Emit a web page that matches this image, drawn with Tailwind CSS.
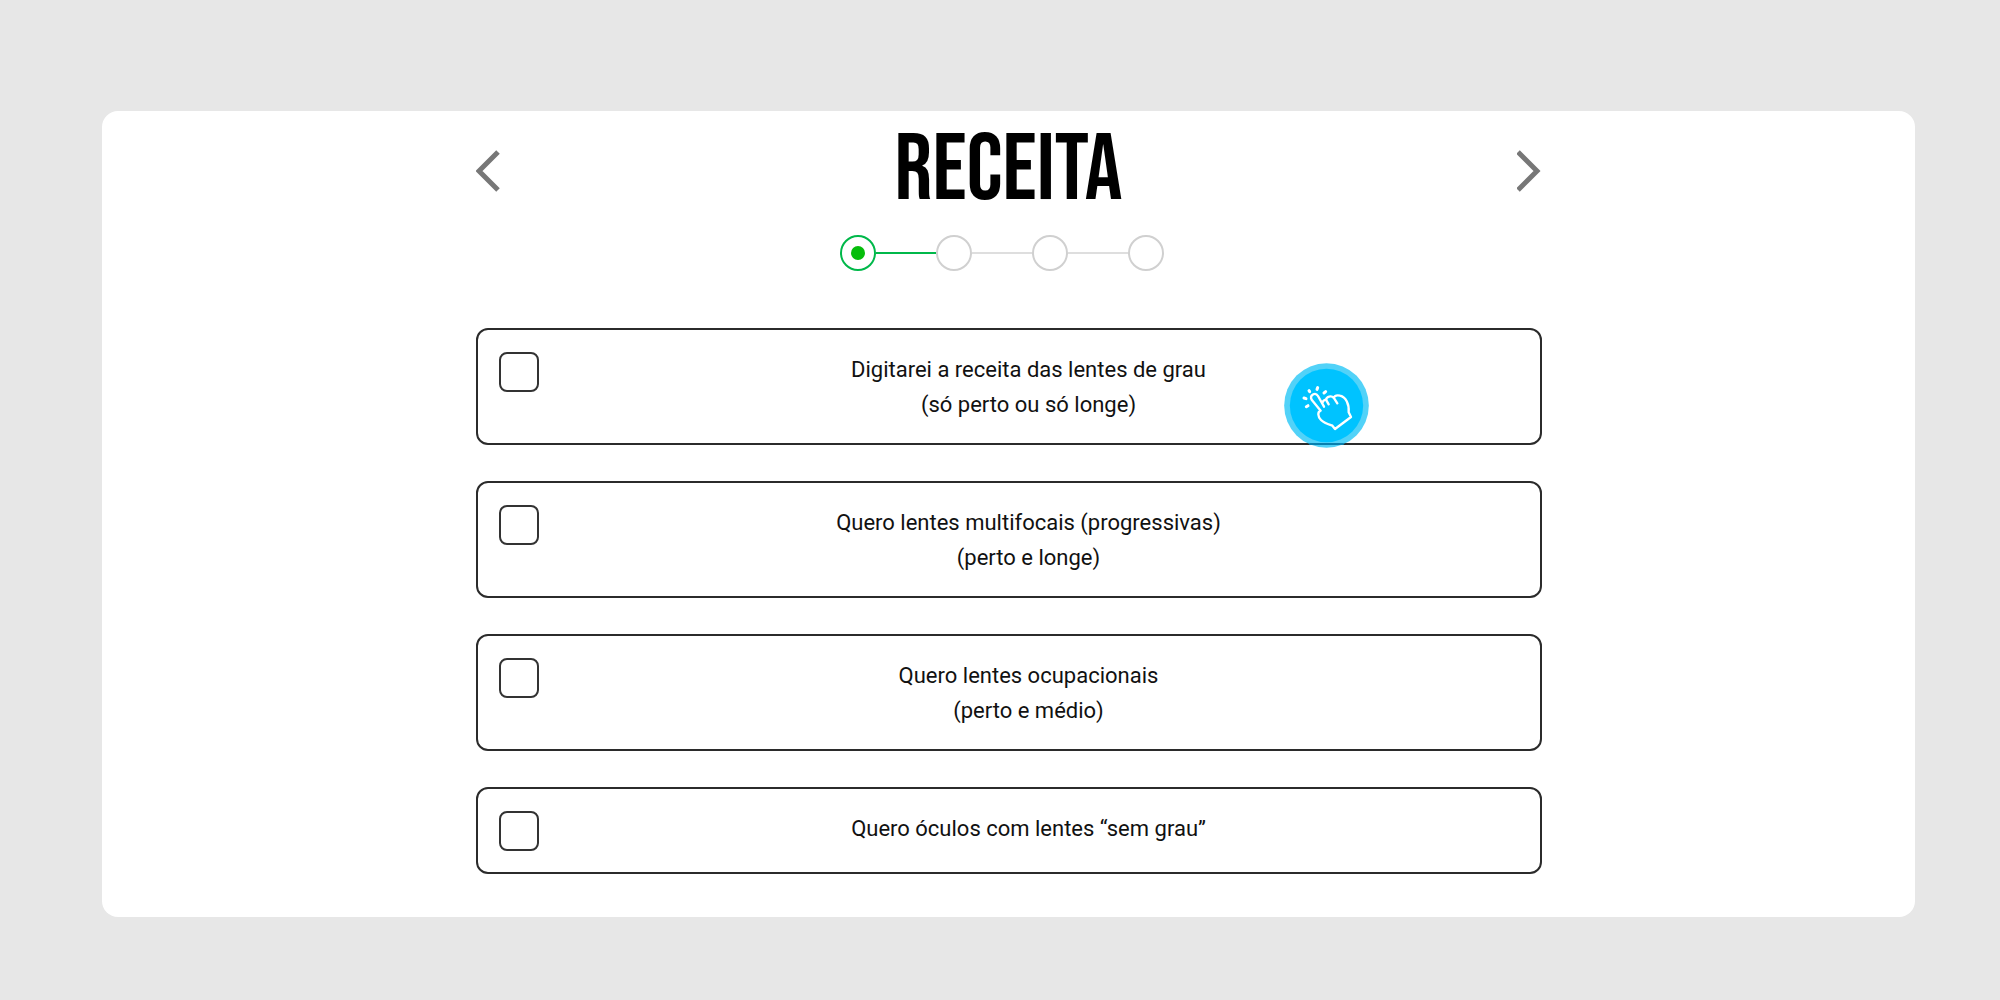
<!DOCTYPE html>
<html lang="pt-BR">
<head>
  <meta charset="UTF-8" />
  <meta name="viewport" content="width=device-width, initial-scale=1" />
  <title>Receita</title>
  <script src="https://cdn.jsdelivr.net/npm/@tailwindcss/browser@4"></script>
</head>
<body class="min-h-screen bg-[#e7e7e7] pt-[111px] pr-[85px] pb-[83px] pl-[102px] font-['Roboto',sans-serif] text-[#111]">

<main class="rounded-2xl bg-white px-6 pt-3 pb-[43px]">
  <div class="mx-auto max-w-[1066px]">

    <!-- Title and arrows -->
    <header class="flex h-24 items-center justify-between">
      <button type="button" aria-label="Voltar" class="cursor-pointer">
        <svg class="h-11 w-6" viewBox="0 0 24 44" fill="none" stroke="#777" stroke-width="5">
          <path d="M22 3L3 22L22 41"/>
        </svg>
      </button>
      <h1 class="font-['Bebas_Neue','Liberation_Sans_Narrow',sans-serif] text-[94px] leading-none font-normal text-black">RECEITA</h1>
      <button type="button" aria-label="Avançar" class="cursor-pointer">
        <svg class="h-11 w-6" viewBox="0 0 24 44" fill="none" stroke="#777" stroke-width="5">
          <path d="M1 3L20 22L1 41"/>
        </svg>
      </button>
    </header>

    <!-- Steps -->
    <ol class="mt-4 flex items-center justify-center pr-3.5" aria-label="Etapas">
      <li class="flex size-9 items-center justify-center rounded-full border-2 border-[#00b84a]" aria-current="step">
        <span class="size-3.5 rounded-full bg-[#06bd0b]"></span>
      </li>
      <li class="flex items-center">
        <span class="h-0.5 w-15 bg-[#00b84a]"></span>
        <span class="size-9 rounded-full border-2 border-[#d0d0d0]"></span>
      </li>
      <li class="flex items-center">
        <span class="h-0.5 w-15 bg-[#dedede]"></span>
        <span class="size-9 rounded-full border-2 border-[#d0d0d0]"></span>
      </li>
      <li class="flex items-center">
        <span class="h-0.5 w-15 bg-[#dedede]"></span>
        <span class="size-9 rounded-full border-2 border-[#d0d0d0]"></span>
      </li>
    </ol>

    <!-- Options -->
    <form class="mt-[57px] flex flex-col gap-9 text-center text-[22px] leading-[35px]">
      <label class="relative flex cursor-pointer items-start rounded-xl border-2 border-[#2b2b2b] px-[21px] pt-[22px] pb-[21px]">
        <input type="checkbox" name="receita" class="size-10 shrink-0 appearance-none rounded-lg border-2 border-[#333] checked:bg-[#06bd0b]" />
        <span class="flex-1">Digitarei a receita das lentes de grau<br>(só perto ou só longe)</span>
        <svg class="absolute top-[33px] right-[171px] size-[85px]" viewBox="72 70 255 255" fill="none" stroke="#fff" stroke-width="7" stroke-linecap="round" stroke-linejoin="round" aria-hidden="true">
          <circle cx="199.500" cy="197.500" r="127" fill="#00bdf5" fill-opacity=".68" stroke="none"/>
          <circle cx="199.500" cy="197.500" r="110" fill="#00c3ff" stroke="none"/>
          <path d="M148 313H251" stroke="#087fae" stroke-width="6" stroke-linecap="butt"/>
          <path d="M192 201L174 169C166 156 148 166 155 180L182 213C172 216 173 231 183 241C193 251 206 254 216 257L225 268L273 232L266 218C268 194 258 172 240 168C232 166 224 168 221 174C214 167 200 170 198 180C192 181 188 184 187 190"/>
          <path d="M198 180L206 194M221 174L232 191"/>
          <path d="M171 149L173 144M147 153L149 156M132 175L138 177M139 201L144 198M192 160L197 156" stroke-width="9"/>
        </svg>
      </label>

      <label class="flex cursor-pointer items-start rounded-xl border-2 border-[#2b2b2b] px-[21px] pt-[22px] pb-[21px]">
        <input type="checkbox" name="receita" class="size-10 shrink-0 appearance-none rounded-lg border-2 border-[#333] checked:bg-[#06bd0b]" />
        <span class="flex-1">Quero lentes multifocais (progressivas)<br>(perto e longe)</span>
      </label>

      <label class="flex cursor-pointer items-start rounded-xl border-2 border-[#2b2b2b] px-[21px] pt-[22px] pb-[21px]">
        <input type="checkbox" name="receita" class="size-10 shrink-0 appearance-none rounded-lg border-2 border-[#333] checked:bg-[#06bd0b]" />
        <span class="flex-1">Quero lentes ocupacionais<br>(perto e médio)</span>
      </label>

      <label class="flex cursor-pointer items-start rounded-xl border-2 border-[#2b2b2b] px-[21px] pt-[22px] pb-[21px]">
        <input type="checkbox" name="receita" class="size-10 shrink-0 appearance-none rounded-lg border-2 border-[#333] checked:bg-[#06bd0b]" />
        <span class="flex-1">Quero óculos com lentes “sem grau”</span>
      </label>
    </form>

  </div>
</main>

</body>
</html>
